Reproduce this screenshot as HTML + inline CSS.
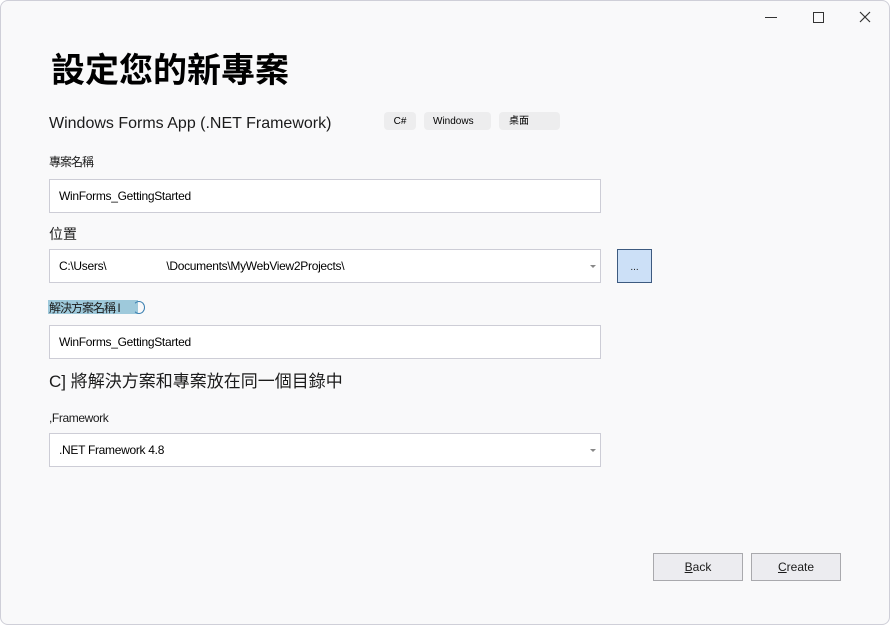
<!DOCTYPE html>
<html><head><meta charset="utf-8"><style>
body{margin:0;width:890px;height:625px;background:#fff;overflow:hidden;font-family:"Liberation Sans","Noto Sans CJK TC",sans-serif;position:relative;}
.win{position:absolute;left:0;top:0;width:890px;height:625px;background:#f9f9fa;border-radius:8px;}
.bd{position:absolute;left:0;top:0;width:888px;height:623px;border:1px solid #cfcfd8;border-radius:8px;}
.a{position:absolute;white-space:nowrap;color:#1b1b1b;}
.box{position:absolute;left:49px;width:550px;height:32px;background:#fff;border:1px solid #cdcdd6;font-size:12px;line-height:32px;letter-spacing:-0.3px;}
.box span{margin-left:9px;}
.arr{position:absolute;right:4px;top:15px;width:0;height:0;border-left:3px solid transparent;border-right:3px solid transparent;border-top:3px solid #888;}
.tag{position:absolute;top:112px;height:18px;background:#ededee;border-radius:4px;font-size:10px;line-height:20px;}
.btn{position:absolute;top:553px;width:88px;height:26px;background:#ececf0;border:1px solid #a9a9ad;font-size:12px;text-align:center;line-height:26px;color:#1b1b1b;}
</style></head><body>
<div class="win">
<div class="a" style="left:765px;top:17px;width:12px;height:1px;background:#333"></div>
<div class="a" style="left:813px;top:12px;width:9px;height:9px;border:1px solid #333"></div>
<svg class="a" style="left:859px;top:11px" width="12" height="12"><path d="M1 1L11 11M11 1L1 11" stroke="#333" stroke-width="1.2"/></svg>
<div class="a" style="left:51px;top:43px;font-size:34px;font-weight:bold;color:#000">設定您的新專案</div>
<div class="a" style="left:49px;top:115px;font-size:16px">Windows Forms App (.NET Framework)</div>
<div class="tag" style="left:384px;width:32px;text-align:center">C#</div>
<div class="tag" style="left:424px;width:67px;"><span style="margin-left:9px">Windows</span></div>
<div class="tag" style="left:499px;width:61px;"><span style="margin-left:10px">桌面</span></div>
<div class="a" style="left:49px;top:153px;font-size:12px;letter-spacing:-1px">專案名稱</div>
<div class="box" style="top:179px"><span>WinForms_GettingStarted</span></div>
<div class="a" style="left:49px;top:224px;font-size:14px">位置</div>
<div class="box" style="top:249px"><span>C:\Users\</span><span style="margin-left:60px">\Documents\MyWebView2Projects\</span><div class="arr"></div></div>
<div class="a" style="left:617px;top:249px;width:33px;height:32px;background:#cce0f7;border:1px solid #3d5a80;text-align:center;font-size:10px;line-height:36px">...</div>
<div class="a" style="left:48px;top:300px;width:90px;height:14px;background:#9ec9db"></div>
<div class="a" style="left:133px;top:301px;width:10px;height:11px;border:1.5px solid #3a7fb0;border-radius:50%;border-left-color:transparent"></div>
<div class="a" style="left:49px;top:299px;font-size:12px;letter-spacing:-1px">解決方案名稱 I</div>
<div class="box" style="top:325px"><span>WinForms_GettingStarted</span></div>
<div class="a" style="left:49px;top:367px;font-size:17px">C] 將解決方案和專案放在同一個目錄中</div>
<div class="a" style="left:49px;top:411px;font-size:12px;letter-spacing:-0.4px">,Framework</div>
<div class="box" style="top:433px"><span>.NET Framework 4.8</span><div class="arr"></div></div>
<div class="btn" style="left:653px"><u>B</u>ack</div>
<div class="btn" style="left:751px"><u>C</u>reate</div>
</div>
<div class="bd"></div>
</body></html>
